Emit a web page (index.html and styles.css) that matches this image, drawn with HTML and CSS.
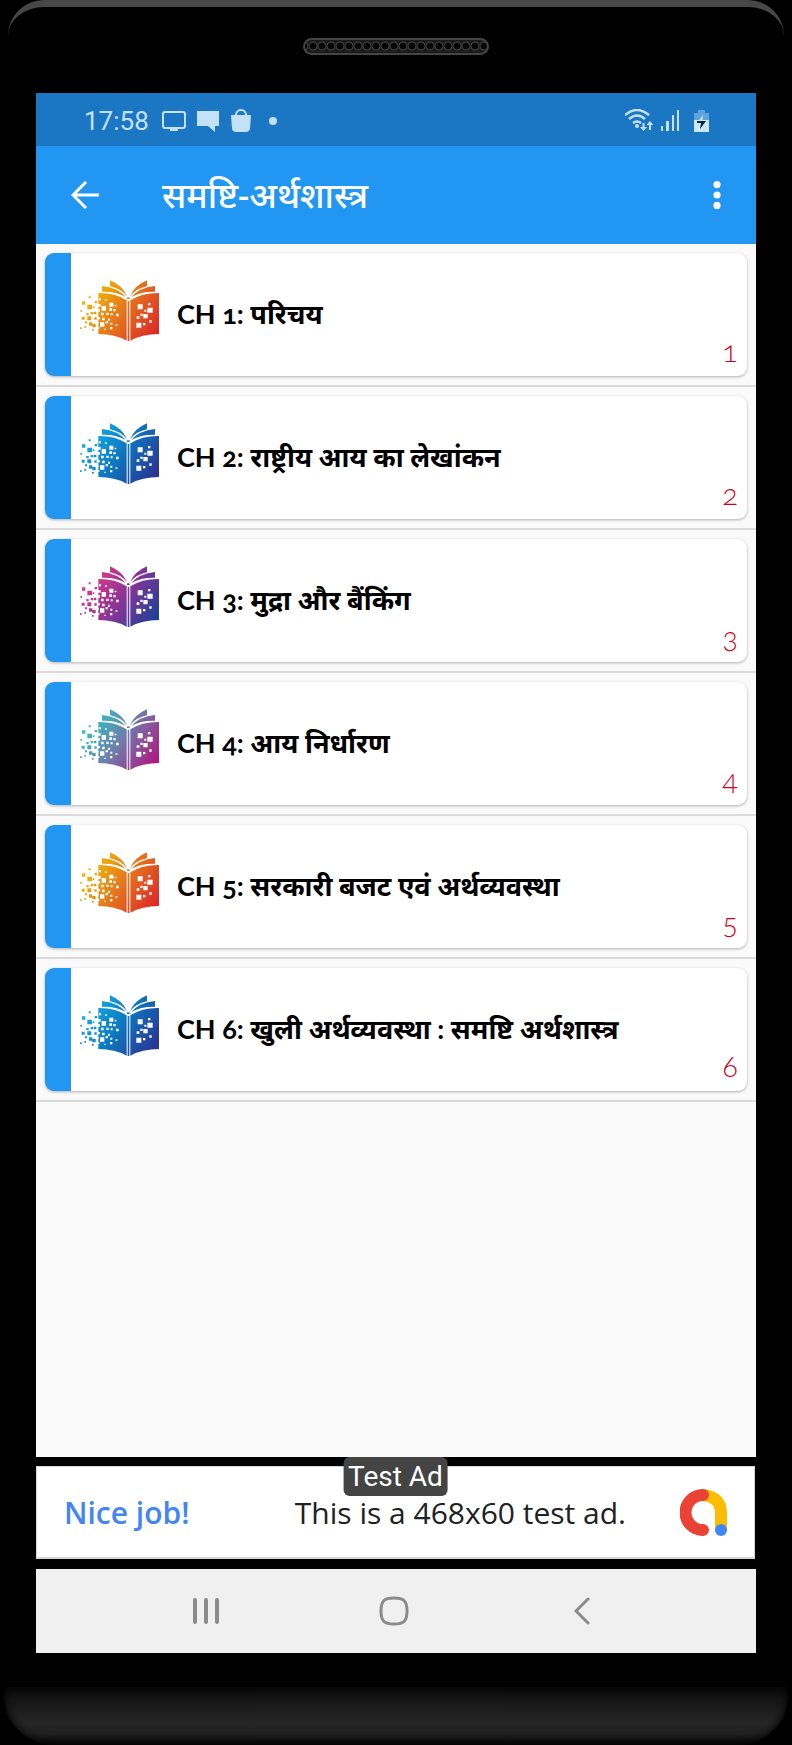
FILE: index.html
```
<!DOCTYPE html>
<html lang="hi">
<head>
<meta charset="utf-8">
<meta name="viewport" content="width=device-width, initial-scale=1.0">
<title>समष्टि-अर्थशास्त्र</title>
<link rel="stylesheet" href="styles.css">
</head>
<body>
<svg class="defs" aria-hidden="true">
  <defs>
    <linearGradient id="orange" gradientUnits="userSpaceOnUse" x1="80" y1="60" x2="290" y2="200">
      <stop offset="0" stop-color="#f6c500"/><stop offset=".5" stop-color="#e57a1c"/><stop offset="1" stop-color="#dc2a2a"/>
    </linearGradient>
    <linearGradient id="blue" gradientUnits="userSpaceOnUse" x1="80" y1="60" x2="290" y2="200">
      <stop offset="0" stop-color="#14b4ee"/><stop offset=".5" stop-color="#0d78c0"/><stop offset="1" stop-color="#2c3394"/>
    </linearGradient>
    <linearGradient id="pink" gradientUnits="userSpaceOnUse" x1="80" y1="60" x2="290" y2="200">
      <stop offset="0" stop-color="#f03c86"/><stop offset=".5" stop-color="#8f3496"/><stop offset="1" stop-color="#1e4098"/>
    </linearGradient>
    <linearGradient id="teal" gradientUnits="userSpaceOnUse" x1="80" y1="60" x2="290" y2="200">
      <stop offset="0" stop-color="#22d0c4"/><stop offset=".5" stop-color="#6d7fae"/><stop offset="1" stop-color="#b01880"/>
    </linearGradient>
    <g id="book">
      <path d="M115 84Q165 83 200 106V227Q165 207 115 207Z"/>
      <path d="M297 84Q247 83 211 106V227Q247 207 297 207Z"/>
      <path d="M203 108H208V228H203Z"/>
      <path d="M126 63Q174 68 197 96Q168 79 126 80Z"/>
      <path d="M285 63Q237 68 214 96Q243 79 285 80Z"/>
      <path d="M150 46Q188 62 201 94Q182 70 150 64Z"/>
      <path d="M261 46Q223 62 210 94Q229 70 261 64Z"/>
      <path d="M201 97h8v5h-8z"/>
      <path d="M66 109h10v10h-10zM86 94h6v6h-6zM82 119h14v14h-14zM61 135h5v5h-5zM79 144h7v7h-7zM65 155h9v9h-9zM92 141h7v7h-7zM101 140h8v8h-8zM82 154h12v12h-12zM75 169h6v6h-6zM87 172h10v10h-10zM97 177h10v10h-10zM60 187h5v5h-5zM73 183h5v5h-5zM104 108h7v7h-7zM98 124h5v5h-5zM103 157h7v7h-7zM96 192h5v5h-5z"/>
      <path fill="#fff" d="M117 100h6v6h-6zM135 103h5v5h-5zM114 117h8v8h-8zM125 123h13v14h-13zM148 113h12v12h-12zM164 119h5v5h-5zM148 130h8v8h-8zM160 132h7v7h-7zM113 133h7v7h-7zM123 143h8v8h-8zM139 143h7v7h-7zM152 145h6v6h-6zM168 146h8v8h-8zM113 156h7v7h-7zM126 158h8v8h-8zM144 161h6v6h-6zM120 172h13v13h-13zM137 168h7v7h-7zM151 173h6v6h-6zM167 178h5v5h-5zM150 186h7v7h-7zM112 186h6v6h-6zM133 191h4v4h-4zM112 172h4v4h-4z"/>
      <path fill="#fff" d="M233 118h15v15h-15zM264 114h7v7h-7zM262 128h16v15h-16zM230 154h8v8h-8zM241 146h7v7h-7zM250 147h13v13h-13zM268 166h7v7h-7zM229 173h15v15h-15zM249 174h7v7h-7zM253 134h6v6h-6z"/>
    </g>
  </defs>
</svg>

<div class="phone">
  <div class="speaker"></div>

  <div class="screen">
    <div class="status-bar">
      <span class="time">17:58</span>
      <svg width="24" height="20" viewBox="0 0 24 20"><rect x="1" y="1" width="22" height="16" rx="2" fill="none" stroke="currentColor" stroke-width="2"/><path d="M8 17h8v3H8z" fill="currentColor"/></svg>
      <svg width="22" height="22" viewBox="0 0 22 22"><path d="M0 1h22v15h-4v6l-7-6H0z" fill="currentColor"/></svg>
      <svg width="22" height="24" viewBox="0 0 22 24"><path d="M1 6h20l-1 14q-1 3-4 3H6q-3 0-4-3z" fill="currentColor"/><path d="M6 9V6a5 5 0 0 1 10 0v3" fill="none" stroke="currentColor" stroke-width="2"/></svg>
      <span class="more-dot"></span>
      <div class="signals">
        <svg width="28" height="23" viewBox="0 0 28 23" fill="none" stroke="currentColor" stroke-width="2.400"><path d="M0 6q12-10 24 0M4 10q8-7 16 0M8 14q4-3 8 0"/><circle cx="12" cy="17" r="2" fill="currentColor" stroke="none"/><path d="M18.500 14v6M25 21v-6" stroke-width="2"/><path d="M15 18h7l-3.500 4zM21.500 16h7l-3.500-4z" fill="currentColor" stroke="none"/></svg>
        <svg width="19" height="21" viewBox="0 0 19 21" fill="currentColor"><path d="M0 16h2v5H0zM5 11h3v10H5zM11 5h2v16h-2zM16 0h2v21h-2z"/></svg>
        <svg width="15" height="22" viewBox="0 0 15 22"><path d="M4 0h7v3h4v7H0V3h4z" fill="#5fa3dc"/><path d="M0 10h15v12H0z" fill="#cce6fb"/><path d="M9 5 3 13h5z" fill="#cce6fb"/><path d="M3 11h9L6 19l1-6H3z" fill="#10243a"/></svg>
      </div>
    </div>

    <header class="app-bar">
      <button class="icon-btn" aria-label="वापस"><svg width="28" height="28" viewBox="0 0 28 28" fill="none" stroke="#fff" stroke-width="3"><path d="M28 14H3M15 1 2 14l13 13"/></svg></button>
      <h1>समष्टि-अर्थशास्त्र</h1>
      <button class="icon-btn menu" aria-label="मेनू"><svg width="8" height="28" viewBox="0 0 8 28" fill="#fff"><circle cx="4" cy="3.600" r="3.600"/><circle cx="4" cy="14" r="3.600"/><circle cx="4" cy="24.400" r="3.600"/></svg></button>
    </header>

    <ul class="chapters">
      <li><a class="card" href="#ch1"><svg class="book" viewBox="60 45 237 183" fill="url(#orange)"><use href="#book"/></svg><span class="title">CH 1: परिचय</span><span class="num">1</span></a></li>
      <li><a class="card" href="#ch2"><svg class="book" viewBox="60 45 237 183" fill="url(#blue)"><use href="#book"/></svg><span class="title">CH 2: राष्ट्रीय आय का लेखांकन</span><span class="num">2</span></a></li>
      <li><a class="card" href="#ch3"><svg class="book" viewBox="60 45 237 183" fill="url(#pink)"><use href="#book"/></svg><span class="title">CH 3: मुद्रा और बैंकिंग</span><span class="num">3</span></a></li>
      <li><a class="card" href="#ch4"><svg class="book" viewBox="60 45 237 183" fill="url(#teal)"><use href="#book"/></svg><span class="title">CH 4: आय निर्धारण</span><span class="num">4</span></a></li>
      <li><a class="card" href="#ch5"><svg class="book" viewBox="60 45 237 183" fill="url(#orange)"><use href="#book"/></svg><span class="title">CH 5: सरकारी बजट एवं अर्थव्यवस्था</span><span class="num">5</span></a></li>
      <li><a class="card" href="#ch6"><svg class="book" viewBox="60 45 237 183" fill="url(#blue)"><use href="#book"/></svg><span class="title">CH 6: खुली अर्थव्यवस्था : समष्टि अर्थशास्त्र</span><span class="num">6</span></a></li>
    </ul>

    <div class="ad-slot">
      <div class="ad">
        <span class="ad-label">Test Ad</span>
        <span class="ad-nice">Nice job!</span>
        <span class="ad-text">This is a 468x60 test ad.</span>
        <svg class="ad-logo" width="47" height="47" viewBox="0 0 47 47" fill="none" stroke-width="12" stroke-linecap="round"><path d="M23 6Q41 8 41 24V40" stroke="#fbbc04"/><path d="M23 6a17.500 17.500 0 0 0 0 35" stroke="#ea4335"/><circle cx="41" cy="41" r="6" fill="#4285f4"/></svg>
      </div>
    </div>

    <nav class="nav-bar">
      <button class="icon-btn" aria-label="हाल के ऐप"><svg width="26" height="28" viewBox="0 0 26 28" stroke="#8b8b8b" stroke-width="4" stroke-linecap="round"><path d="M2 3v22M13 3v22M24 3v22"/></svg></button>
      <button class="icon-btn" aria-label="होम"><svg width="30" height="30" viewBox="0 0 30 30" fill="none" stroke="#8b8b8b" stroke-width="3"><path d="M15 2C25 2 28 5 28 15S25 28 15 28 2 25 2 15 5 2 15 2z"/></svg></button>
      <button class="icon-btn" aria-label="पीछे"><svg width="16" height="28" viewBox="0 0 16 28" fill="none" stroke="#8b8b8b" stroke-width="3" stroke-linecap="round"><path d="M14 2 2 14l12 12"/></svg></button>
    </nav>
  </div>

  <div class="chin"></div>
</div>
</body>
</html>
```
FILE: styles.css
```
* {
  box-sizing: border-box;
}
body {
  margin: 0;
  background: #000;
  font-family: "Noto Sans", "Noto Sans Devanagari", sans-serif;
}
.defs {
  position: absolute;
  width: 0;
  height: 0;
}
.phone {
  display: flex;
  flex-direction: column;
  min-height: 100vh;
  margin: 0 8px;
  border-top: 7px solid #484848;
  border-radius: 36px 36px 0 0;
}
.speaker {
  width: 186px;
  height: 17px;
  margin: 31px auto 38px;
  border: 2px solid #444;
  border-radius: 9px;
  background: radial-gradient(circle at 5px 6px, #050505 3px, #484848 4px, #1a1a1a 5px) 3px 0 / 9px 13px;
}
.screen {
  flex: 1;
  display: flex;
  flex-direction: column;
  margin: 0 28px;
  background: #fafafa;
}

/* status bar */
.status-bar {
  display: flex;
  align-items: center;
  gap: 11px;
  height: 53px;
  padding: 2px 47px 0 48px;
  background: #1b76c4;
  color: #c5e1f8;
}
.time {
  margin-right: 2px;
  font: 26px Roboto, sans-serif;
}
.more-dot {
  width: 8px;
  height: 8px;
  margin-left: 6px;
  border-radius: 50%;
  background: #c5e1f8;
}
.signals {
  display: flex;
  align-items: center;
  gap: 8px;
  margin-left: auto;
}
.signals svg:last-child {
  margin-left: 6px;
}

/* toolbar */
.icon-btn {
  display: flex;
  justify-content: center;
  padding: 0;
  border: none;
  background: none;
  cursor: pointer;
}
.app-bar {
  display: flex;
  align-items: center;
  height: 98px;
  padding: 0 35px;
  background: #2196f3;
}
h1 {
  margin: 0 0 0 63px;
  color: #fff;
  font-size: 35px;
  line-height: 48px;
  font-weight: 500;
}
.menu {
  margin-left: auto;
}

/* chapter list */
.chapters {
  flex: 1;
  margin: 0;
  padding: 0;
  list-style: none;
}
.chapters li {
  padding: 9px;
  border-bottom: 2px solid #dadada;
}
.card {
  display: flex;
  height: 123px;
  padding-right: 9px;
  border-left: 26px solid #2196f3;
  border-radius: 9px;
  background: #fff;
  box-shadow: 0 1px 3px rgba(0, 0, 0, 0.3);
  color: #000;
  text-decoration: none;
}
.book {
  width: 79px;
  height: 61px;
  margin: 27px 18px 0 9px;
}
.title {
  align-self: center;
  padding-top: 2px;
  font-family: Lato, "Noto Sans Devanagari", "Noto Sans", sans-serif;
  font-size: 27px;
  font-weight: 700;
  font-variant-numeric: oldstyle-nums;
}
.num {
  align-self: flex-end;
  margin-left: auto;
  padding-bottom: 9px;
  color: #d0021b;
  font: 300 29px/32px Lato, sans-serif;
  font-variant-numeric: oldstyle-nums;
}

/* banner */
.ad-slot {
  padding: 9px 1px 10px 0;
  background: #000;
}
.ad {
  position: relative;
  display: flex;
  align-items: center;
  height: 93px;
  padding: 0 27px;
  border: 1px solid #d5d8da;
  border-bottom-width: 2px;
  background: #fff;
  font-family: "Open Sans", sans-serif;
  font-size: 30px;
}
.ad-label {
  position: absolute;
  top: -10px;
  left: 50%;
  transform: translateX(-50%);
  padding: 1px 5px 0;
  border-radius: 6px;
  background: #444;
  color: #fff;
  font: 28px/38px Roboto, sans-serif;
}
.ad-nice {
  color: #4285f4;
  font-weight: 600;
}
.ad-text {
  margin-left: auto;
  color: #202124;
}
.ad-logo {
  margin-left: 54px;
}

/* system navigation */
.nav-bar {
  display: flex;
  align-items: center;
  justify-content: center;
  height: 84px;
  padding-right: 5px;
  background: #f0f0f0;
}
.nav-bar .icon-btn {
  width: 188px;
}
.chin {
  height: 58px;
  margin: 34px -4px 0;
  border-radius: 0 0 50px 50px;
  background: linear-gradient(#0c0c0c, #262626 60%, #222 80%, #080808);
  box-shadow: inset 0 0 12px #000;
}
```
